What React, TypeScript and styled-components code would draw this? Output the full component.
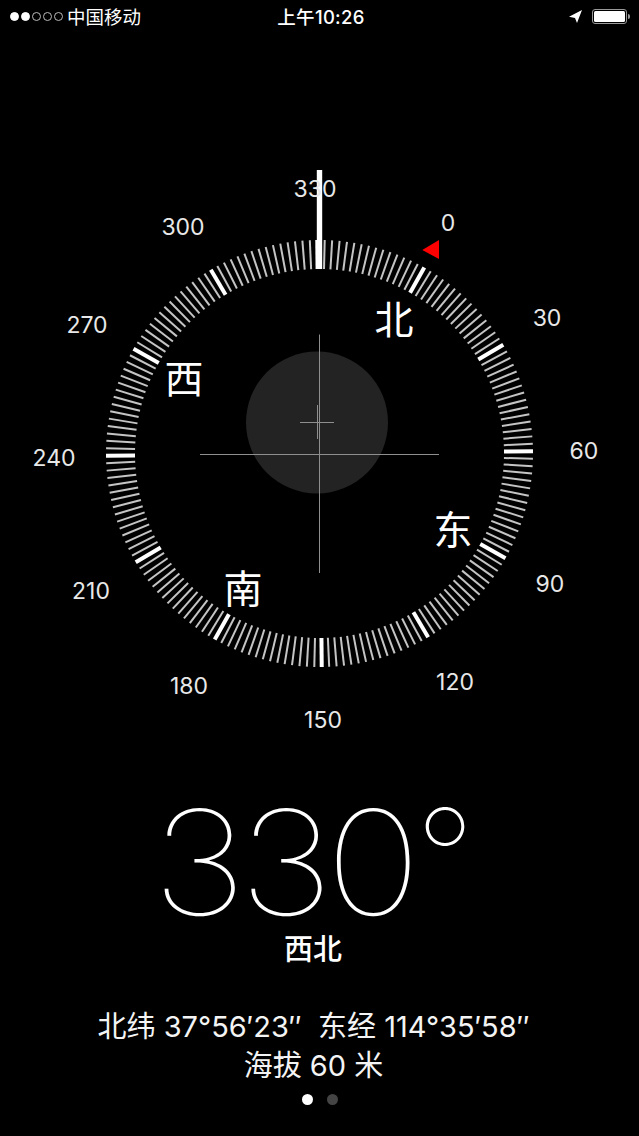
import React from "react";
import styled, { createGlobalStyle } from "styled-components";

const SANS = `"Inter", "Liberation Sans", "Noto Sans CJK SC", sans-serif`;
const CX = 319.5;
const CY = 413.5; // dial centre inside the dial canvas (canvas starts at y=40)
const ROT = -0.6;

const Global = createGlobalStyle`
  html, body { margin: 0; padding: 0; background: #000; }
  body { font-family: ${SANS}; color: #fff; }
`;

const Screen = styled.div`
  width: 639px;
  height: 1136px;
  background: #000;
  overflow: hidden;
  display: flex;
  flex-direction: column;
`;

const StatusBar = styled.header`
  height: 40px;
  box-sizing: border-box;
  padding: 0 12px 7px 10px;
  display: grid;
  grid-template-columns: 1fr auto 1fr;
  align-items: center;
  font-size: 18px;
`;
const Carrier = styled.div`
  display: flex;
  align-items: center;
  gap: 2px;
`;
const CarrierName = styled.span`
  margin-left: 2px;
  font-size: 18.5px;
  line-height: 32px;
`;
const Signal = styled.span<{ $on?: boolean }>`
  width: 9px;
  height: 9px;
  box-sizing: border-box;
  border-radius: 50%;
  border: 1px solid ${(p) => (p.$on ? "#fff" : "#bbb")};
  background: ${(p) => (p.$on ? "#fff" : "transparent")};
`;
const Clock = styled.div`
  font-size: 18.5px;
  font-weight: 500;
  line-height: 32px;
  letter-spacing: 0.3px;
  margin-left: 5px;
`;
const StatusRight = styled.div`
  display: flex;
  justify-content: flex-end;
  align-items: center;
  gap: 9px;
`;
const Battery = styled.div`
  width: 35px;
  height: 15px;
  box-sizing: border-box;
  padding: 1px;
  border: 1px solid #999;
  border-radius: 3px;
  position: relative;
  &::before {
    content: "";
    display: block;
    height: 100%;
    background: #fff;
    border-radius: 1.5px;
  }
  &::after {
    content: "";
    position: absolute;
    right: -4px;
    top: 4px;
    width: 2px;
    height: 5px;
    background: #999;
    border-radius: 0 2px 2px 0;
  }
`;

const Dial = styled.section`
  position: relative;
  height: 720px;
  flex: none;
`;
const DialArt = styled.svg`
  display: block;
  width: 639px;
  height: 720px;
`;
const Degree = styled.span<{ $x: number; $y: number }>`
  position: absolute;
  left: ${(p) => p.$x}px;
  top: ${(p) => p.$y - 40}px;
  transform: translate(-50%, -50%);
  font-size: 23px;
  line-height: 1;
  color: #e8e8e8;
`;
const Cardinal = styled.span<{ $x: number; $y: number }>`
  position: absolute;
  left: ${(p) => p.$x}px;
  top: ${(p) => p.$y - 43}px;
  transform: translate(-50%, -50%);
  font-size: 39px;
  line-height: 1;
  color: #fff;
  font-family: "Noto Sans CJK SC", sans-serif;
`;

const Reading = styled.section`
  display: flex;
  flex-direction: column;
  align-items: center;
`;
const Heading = styled.div`
  align-self: flex-start;
  display: flex;
  align-items: flex-start;
  height: 124px;
  margin: 43px 0 0 152px;
  font-weight: 100;
`;
const HeadingDigits = styled.span`
  display: inline-block;
  font-size: 145px;
  line-height: 120px;
  letter-spacing: -7px;
  transform: scaleX(1.12);
  transform-origin: left top;
  margin-right: 30px;
`;
const HeadingRing = styled.span`
  font-size: 130px;
  line-height: 106px;
`;
const Direction = styled.div`
  font-size: 29px;
  font-weight: 500;
  line-height: 40px;
  font-family: "Noto Sans CJK SC", sans-serif;
  margin-left: -13px;
`;
const Coordinates = styled.div`
  margin: 40px 0 0 -12px;
  font-size: 29px;
  line-height: 39px;
  text-align: center;
  color: #f4f4f4;
  white-space: pre;
`;
const Pager = styled.div`
  display: flex;
  gap: 14px;
  margin-top: 9px;
`;
const PagerDot = styled.span<{ $on?: boolean }>`
  width: 11px;
  height: 11px;
  border-radius: 50%;
  background: ${(p) => (p.$on ? "#fff" : "#444")};
`;

const DEGREES: [string, number, number][] = [
  ["330", 315, 189],
  ["0", 448, 223],
  ["30", 547, 318],
  ["60", 584, 451],
  ["90", 550, 584],
  ["120", 455, 682],
  ["150", 323, 720],
  ["180", 189, 686],
  ["210", 91, 591],
  ["240", 54, 458],
  ["270", 87, 325],
  ["300", 183, 227],
];
const CARDINALS: [string, number, number][] = [
  ["北", 394, 320],
  ["东", 453, 530],
  ["南", 243, 589],
  ["西", 184, 379],
];

const ticks = Array.from({ length: 180 }, (_, i) => i * 2);

export default function App() {
  return (
    <Screen>
      <Global />
      <StatusBar>
        <Carrier>
          <Signal $on />
          <Signal $on />
          <Signal />
          <Signal />
          <Signal />
          <CarrierName>中国移动</CarrierName>
        </Carrier>
        <Clock>上午10:26</Clock>
        <StatusRight>
          <svg width="14" height="14" viewBox="0 0 14 14">
            <path d="M13 0 L0 6.7 L6 8 L8 13 Z" fill="#fff" />
          </svg>
          <Battery />
        </StatusRight>
      </StatusBar>
      <Dial>
        <DialArt viewBox="0 0 639 720">
          <circle cx={317} cy={382.5} r={71} fill="#232323" />
          <g stroke="#8f8f8f" strokeWidth={1}>
            <line x1={319.5} y1={294.5} x2={319.5} y2={533} />
            <line x1={200} y1={414.5} x2={439} y2={414.5} />
            <line x1={300} y1={382.5} x2={334} y2={382.5} />
            <line x1={317.5} y1={365} x2={317.5} y2={399} />
          </g>
          <g transform={`rotate(${ROT} ${CX} ${CY})`}>
            {ticks.map((a) => {
              const major = a % 30 === 0;
              return (
                <line
                  key={a}
                  x1={CX}
                  y1={CY - 213.5}
                  x2={CX}
                  y2={CY - 184.5}
                  stroke={major ? "#fff" : "#c4c4c4"}
                  strokeWidth={major ? 4 : 2}
                  transform={`rotate(${a} ${CX} ${CY})`}
                />
              );
            })}
          </g>
          <rect x={316.8} y={130} width={5.4} height={99} fill="#fff" />
          <path d="M422.3 210 L439 200 L439 219 Z" fill="#f00" />
        </DialArt>
        {DEGREES.map(([t, x, y]) => (
          <Degree key={t} $x={x} $y={y}>
            {t}
          </Degree>
        ))}
        {CARDINALS.map(([t, x, y]) => (
          <Cardinal key={t} $x={x} $y={y}>
            {t}
          </Cardinal>
        ))}
      </Dial>
      <Reading>
        <Heading>
          <HeadingDigits>330</HeadingDigits>
          <HeadingRing>°</HeadingRing>
        </Heading>
        <Direction>西北</Direction>
        <Coordinates>{"北纬 37°56′23″  东经 114°35′58″\n海拔 60 米"}</Coordinates>
        <Pager>
          <PagerDot $on />
          <PagerDot />
        </Pager>
      </Reading>
    </Screen>
  );
}
